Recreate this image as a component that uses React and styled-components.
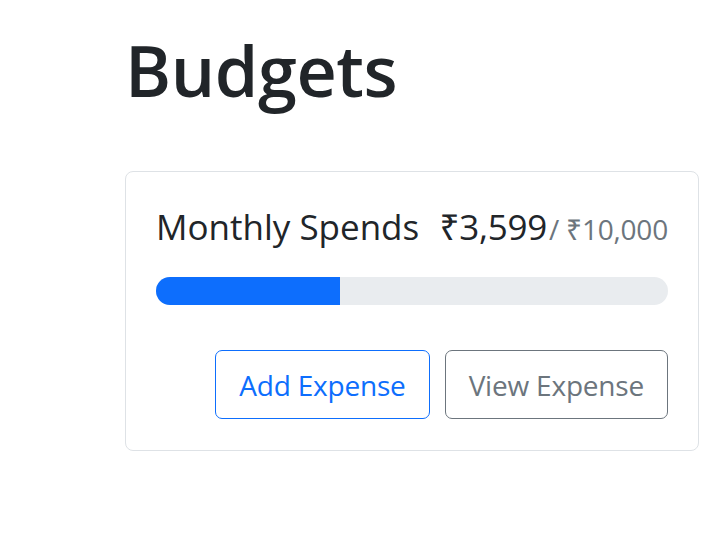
import React from "react";
import styled, { createGlobalStyle } from "styled-components";

const Global = createGlobalStyle`
  html, body { margin: 0; padding: 0; background: #fff; }
  body { font-family: "Open Sans", "Noto Sans", sans-serif; color: #212529; }
  * { box-sizing: border-box; }
`;

const Page = styled.div`
  padding: 28px 21px 0 125px;
  width: 720px;
`;

const Heading = styled.h1`
  margin: 0 0 59px 0;
  font-size: 70px;
  line-height: 1.2;
  font-weight: 600;
  letter-spacing: -0.4px;
  color: #212529;
`;

const Card = styled.div`
  width: 574px;
  border: 1px solid #dee2e6;
  border-radius: 8px;
  padding: 34px 30px 31px 30px;
  display: flex;
  flex-direction: column;
`;

const Title = styled.div`
  display: flex;
  justify-content: space-between;
  align-items: baseline;
  font-size: 35px;
  line-height: 1.2;
  letter-spacing: 0;
  margin-bottom: 29px;
`;

const Amount = styled.div`
  display: flex;
  align-items: baseline;
  letter-spacing: -0.3px;
`;

const Max = styled.span`
  font-size: 28px;
  color: #6c757d;
  margin-left: 2px;
  letter-spacing: -0.2px;
`;

const Track = styled.div`
  height: 28px;
  background: #e9ecef;
  border-radius: 14px;
  overflow: hidden;
  display: flex;
`;

const Fill = styled.div`
  background: #0d6efd;
  height: 100%;
`;

const Actions = styled.div`
  display: flex;
  justify-content: flex-end;
  gap: 15px;
  margin-top: 45px;
`;

const Button = styled.button`
  font-family: inherit;
  font-size: 28px;
  line-height: 1.5;
  letter-spacing: -0.2px;
  padding: 12px 23px;
  height: 69px;
  background: #fff;
  border-radius: 7px;
  border: 1px solid ${(p) => (p.$variant === "primary" ? "#0d6efd" : "#6c757d")};
  color: ${(p) => (p.$variant === "primary" ? "#0d6efd" : "#6c757d")};
  cursor: pointer;
`;

export default function App() {
  const amount = 3599;
  const max = 10000;
  return (
    <>
      <Global />
      <Page>
        <Heading>Budgets</Heading>
        <Card>
          <Title>
            <div>Monthly Spends</div>
            <Amount>
              ₹3,599
              <Max>/ ₹10,000</Max>
            </Amount>
          </Title>
          <Track>
            <Fill style={{ width: `${(amount / max) * 100}%` }} />
          </Track>
          <Actions>
            <Button $variant="primary">Add Expense</Button>
            <Button $variant="secondary">View Expense</Button>
          </Actions>
        </Card>
      </Page>
    </>
  );
}
